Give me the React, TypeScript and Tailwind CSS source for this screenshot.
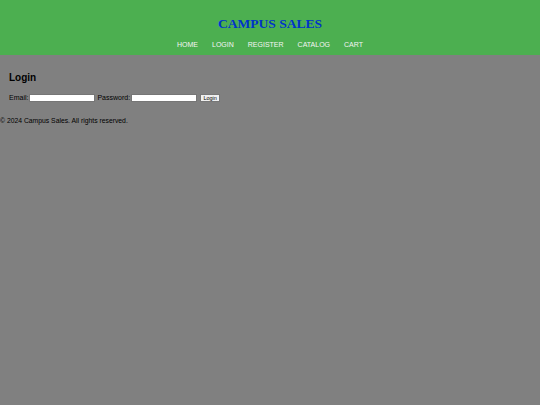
export default function App() {
  const links = ['HOME', 'LOGIN', 'REGISTER', 'CATALOG', 'CART'];
  return (
    <div className="min-h-[405px] bg-[#808080] font-['Liberation_Sans',Arial,sans-serif] text-black">
      <header className="h-[55px] bg-[#4caf50] flex flex-col items-center pt-[15px]">
        <h1 className="font-['Liberation_Serif','Times_New_Roman',serif] font-bold text-[13.5px] leading-[18px] text-[#0033cc]">
          CAMPUS SALES
        </h1>
        <nav className="mt-[7px] flex gap-[14px] text-[7px] leading-[10px] text-[#f4f4f4]">
          {links.map((l) => (
            <a key={l} href="#">
              {l}
            </a>
          ))}
        </nav>
      </header>
      <main className="px-[9px] pt-[16px]">
        <h2 className="text-[10px] font-bold leading-[13px]">Login</h2>
        <form className="mt-[9px] flex items-center gap-[1px] text-[7px] leading-[9px]">
          <label>Email:</label>
          <input className="w-[66px] h-[8px] bg-white border border-[#767676]" />
          <label className="ml-[1px]">Password:</label>
          <input className="w-[66px] h-[8px] bg-white border border-[#767676]" />
          <button className="ml-[2px] w-[20px] h-[8px] bg-[#efefef] border border-[#767676] text-[5.5px] leading-[6px]">
            Login
          </button>
        </form>
      </main>
      <footer className="mt-[14px] text-[6.8px] leading-[9px]">© 2024 Campus Sales. All rights reserved.</footer>
    </div>
  );
}
